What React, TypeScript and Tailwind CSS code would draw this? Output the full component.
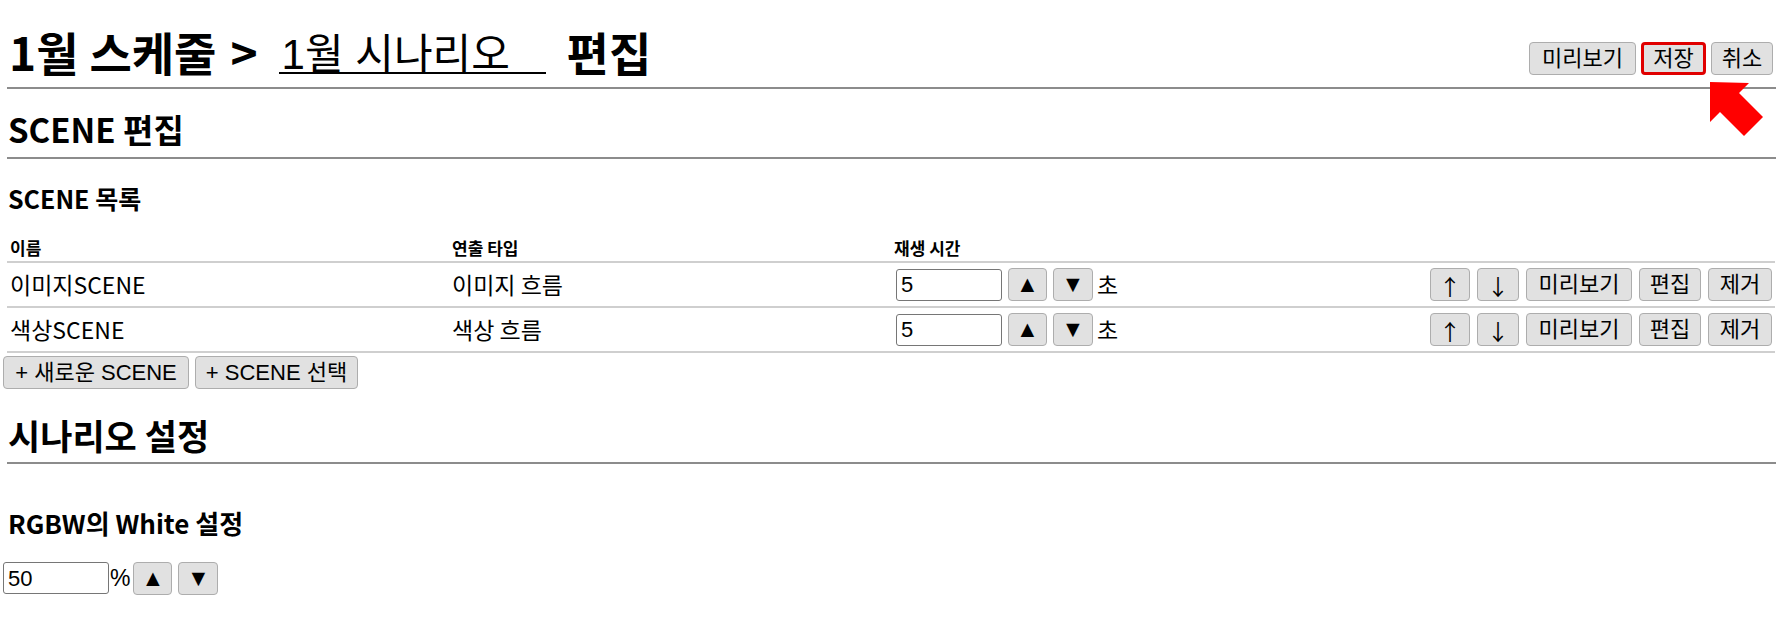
import React from 'react'

const btn =
  'h-[33px] inline-flex items-center justify-center bg-[#e1e1e1] border border-[#adadad] rounded-[4px] text-[22px] leading-none text-black font-["Liberation_Sans","DejaVu_Sans","Noto_Sans_CJK_KR",sans-serif]'

const input =
  'h-[32px] border border-[#767676] rounded-[3px] px-[4px] text-[22px] text-black bg-white outline-none font-["Liberation_Sans","Noto_Sans_CJK_KR",sans-serif]'

const scenes = [
  { name: '이미지SCENE', type: '이미지 흐름', time: 5 },
  { name: '색상SCENE', type: '색상 흐름', time: 5 },
]

const Stepper = () => (
  <>
    <button className={`${btn} w-[39px] !text-[23px] font-["DejaVu_Sans",sans-serif]`}>▲</button>
    <button className={`${btn} w-[40px] !text-[23px] font-["DejaVu_Sans",sans-serif]`}>▼</button>
  </>
)

const arrowBtn = `${btn} !text-[22px] font-["Noto_Sans_CJK_KR",sans-serif]`

export default function App() {
  return (
    <div className='relative min-h-[634px] bg-white text-black pl-[3px] pr-[8px] font-["Noto_Sans_CJK_KR",sans-serif]'>
      {/* title bar */}
      <div className="ml-[4px] h-[87px] flex justify-between items-start">
        <h1 className="mt-[28px] ml-[2px] text-[46px] font-bold leading-[46px] flex items-end whitespace-nowrap">
          <span>1월</span>
          <span className="ml-[11px]">스케줄</span>
          <span className="ml-[14px]">&gt;</span>
          <input
            defaultValue="1월 시나리오"
            className='ml-[21px] w-[267px] h-[46px] border-b-2 border-black px-[3px] text-[42px] font-normal leading-[44px] outline-none bg-transparent font-["Liberation_Sans","Noto_Sans_CJK_KR",sans-serif]'
          />
          <span className="ml-[21px]">편집</span>
        </h1>
        <div className="mt-[42px] mr-[3px] flex gap-[5px]">
          <button className={`${btn} w-[107px]`}>미리보기</button>
          <button className={`${btn} w-[65px] border-[3px] border-[#e00000]`}>저장</button>
          <button className={`${btn} w-[62px]`}>취소</button>
        </div>
      </div>
      <div className="ml-[4px] h-[2px] bg-[#8c8c8c]" />

      {/* SCENE 편집 */}
      <h2 className="ml-[5px] mt-[22px] mb-[10px] text-[33px] font-bold leading-[36px]">SCENE 편집</h2>
      <div className="ml-[4px] h-[2px] bg-[#8c8c8c]" />

      <h3 className="ml-[5px] mt-[24px] text-[25px] font-bold leading-[30px]">SCENE 목록</h3>

      <div className="ml-[4px] mr-[1px]">
        <div className="grid grid-cols-4 h-[48px] items-end pb-[3px] text-[17px] font-bold leading-[20px]">
          <div className="pl-[3px]">이름</div>
          <div className="pl-[3px]">연출 타입</div>
          <div className="pl-[3px]">재생 시간</div>
          <div />
        </div>
        {scenes.map((s) => (
          <div key={s.name} className="grid grid-cols-4 items-center border-t-2 border-[#cfcfcf] py-[5px] text-[23px] leading-[33px]">
            <div className="pl-[3px]">{s.name}</div>
            <div className="pl-[3px]">{s.type}</div>
            <div className="pl-[5px] flex items-center gap-[6px]">
              <input defaultValue={s.time} className={`${input} w-[106px]`} />
              <Stepper />
              <span className="-ml-[2px]">초</span>
            </div>
            <div className="pr-[3px] flex justify-end gap-[7px]">
              <button className={`${arrowBtn} w-[40px]`}>↑</button>
              <button className={`${arrowBtn} w-[42px]`}>↓</button>
              <button className={`${btn} w-[106px]`}>미리보기</button>
              <button className={`${btn} w-[62px]`}>편집</button>
              <button className={`${btn} w-[64px]`}>제거</button>
            </div>
          </div>
        ))}
        <div className="border-t-2 border-[#cfcfcf]" />
      </div>
      <div className="mt-[3px] flex gap-[6px]">
        <button className={`${btn} w-[186px]`}>+ 새로운 SCENE</button>
        <button className={`${btn} w-[163px]`}>+ SCENE 선택</button>
      </div>

      {/* 시나리오 설정 */}
      <h2 className="ml-[5px] mt-[28px] mb-[9px] text-[35px] font-bold leading-[36px]">시나리오 설정</h2>
      <div className="ml-[4px] h-[2px] bg-[#8c8c8c]" />

      <h3 className="ml-[5px] mt-[44px] text-[26px] font-bold leading-[30px]">RGBW의 White 설정</h3>
      <div className="mt-[23px] flex items-center">
        <input defaultValue="50" className={`${input} w-[106px]`} />
        <span className='ml-[1px] text-[23px] font-["Liberation_Sans",sans-serif]'>%</span>
        <div className="ml-[3px] flex gap-[6px]">
          <Stepper />
        </div>
      </div>

      {/* annotation arrow pointing at 저장 */}
      <svg className="absolute left-[1706px] top-[78px]" width="78" height="64" viewBox="0 0 78 64">
        <polygon points="4,4 43,5 33,15 57,39 38,58 14,34 4,44" fill="#ff0000" />
      </svg>
    </div>
  )
}
